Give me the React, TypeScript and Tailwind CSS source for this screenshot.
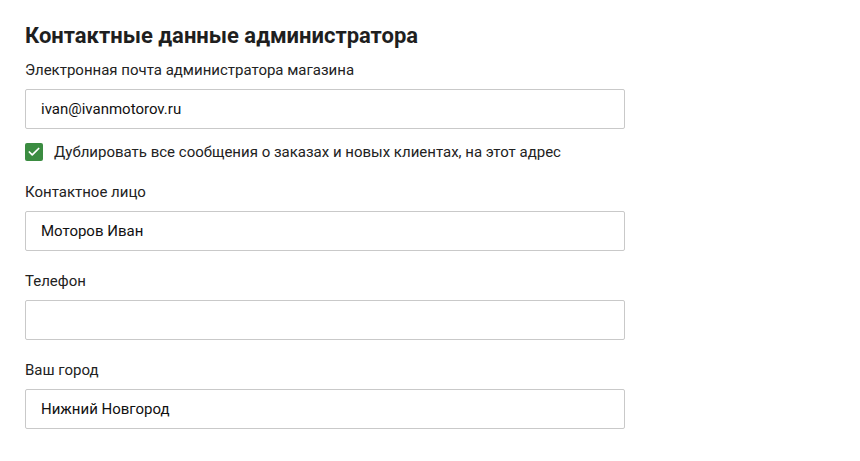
import { Check } from "lucide-react";

const FONT = "font-['Roboto','Noto_Sans',sans-serif]";

function Field({ label, value }: { label: string; value: string }) {
  return (
    <div className="mt-[20px]">
      <div className="text-[15px] leading-[20px] text-[#222]">{label}</div>
      <div className="mt-[9px] flex h-[40px] w-[600px] items-center rounded-[2px] border border-[#c9c9c9] bg-white px-[15px] text-[15px] text-[#111]">
        {value}
      </div>
    </div>
  );
}

export default function App() {
  return (
    <div className={`${FONT} min-h-[461px] w-[860px] bg-white pl-[25px] pt-[22px]`}>
      <h2 className="text-[22px] font-bold leading-[28px] text-[#1f1f1f]">
        Контактные данные администратора
      </h2>

      <div className="mt-[10px] text-[15px] leading-[20px] text-[#222]">
        Электронная почта администратора магазина
      </div>
      <div className="mt-[9px] flex h-[40px] w-[600px] items-center rounded-[2px] border border-[#c9c9c9] bg-white px-[15px] text-[15px] text-[#111]">
        ivan@ivanmotorov.ru
      </div>

      <div className="mt-[13px] flex items-center gap-[11px] text-[15px] leading-[20px] text-[#222]">
        <span className="flex h-[18px] w-[18px] items-center justify-center rounded-[2px] bg-[#3b8c41]">
          <Check size={14} strokeWidth={3} className="text-white" />
        </span>
        Дублировать все сообщения о заказах и новых клиентах, на этот адрес
      </div>

      <Field label="Контактное лицо" value="Моторов Иван" />
      <Field label="Телефон" value="" />
      <Field label="Ваш город" value="Нижний Новгород" />
    </div>
  );
}
